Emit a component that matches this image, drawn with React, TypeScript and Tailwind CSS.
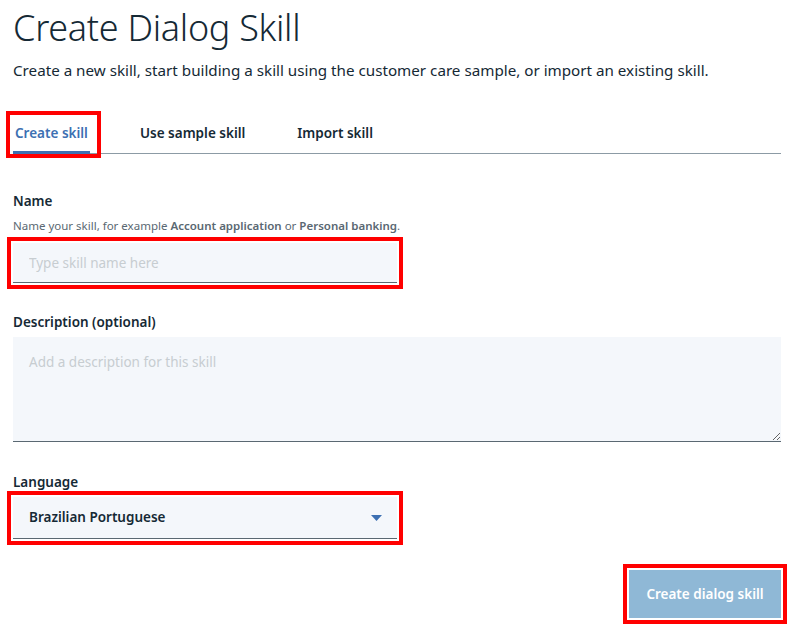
import React, { useState } from 'react';

const tabs = ['Create skill', 'Use sample skill', 'Import skill'];

const App: React.FC = () => {
  const [active, setActive] = useState(0);
  const [name, setName] = useState('');
  const [desc, setDesc] = useState('');

  return (
    <div className="min-h-screen bg-white text-[#152935] font-['Noto_Sans',sans-serif] px-[13px] pt-[4px]">
      <h1 className="text-[36px] font-light leading-[48px] tracking-[-0.3px]">Create Dialog Skill</h1>
      <p className="text-[15.2px] leading-[24px] mt-[6px]">
        Create a new skill, start building a skill using the customer care sample, or import an existing skill.
      </p>

      {/* Tabs */}
      <div className="mt-[31px] flex items-end border-b border-[#8c9ba5] w-[768px] h-[41px]">
        {tabs.map((t, i) => (
          <button
            key={t}
            onClick={() => setActive(i)}
            className={
              'relative h-[42px] -mb-px text-[13.5px] font-semibold px-[2px] pt-[9px] pb-[6px] border-b-[3px] ' +
              (i === 0 ? 'mr-[48px] ' : i === 1 ? 'mr-[48px] ' : '') +
              (i === active ? 'text-[#3d70b2] border-[#3d70b2]' : 'text-[#152935] border-transparent')
            }
          >
            {t}
            {i === 0 && (
              <span className="absolute -top-[1px] -bottom-[7px] -left-[7px] -right-[11px] border-[4px] border-[#f00] pointer-events-none" />
            )}
          </button>
        ))}
      </div>

      {/* Name */}
      <div className="mt-[38px]">
        <label className="block text-[13.5px] font-semibold leading-[18px]">Name</label>
        <p className="text-[11.5px] text-[#5a6872] mt-[8px] leading-[16px]">
          Name your skill, for example <span className="font-semibold">Account application</span> or{' '}
          <span className="font-semibold">Personal banking</span>.
        </p>
        <input
          value={name}
          onChange={(e) => setName(e.target.value)}
          placeholder="Type skill name here"
          className="mt-[9px] block w-[384px] h-[40px] bg-[#f4f7fb] border-b border-[#5a6872] px-[16px] text-[13.5px] placeholder:text-[#c7cdd1] outline-[4px] outline-[#f00] outline-offset-[2px]"
        />
      </div>

      {/* Description */}
      <div className="mt-[30px]">
        <label className="block text-[13.5px] font-semibold leading-[18px]">Description (optional)</label>
        <textarea
          value={desc}
          onChange={(e) => setDesc(e.target.value)}
          placeholder="Add a description for this skill"
          className="mt-[6px] block w-[768px] h-[105px] bg-[#f4f7fb] border-b border-[#5a6872] px-[16px] pt-[15px] text-[13.5px] placeholder:text-[#c7cdd1] outline-none"
        />
      </div>

      {/* Language */}
      <div className="mt-[31px]">
        <label className="block text-[13.5px] font-semibold leading-[18px]">Language</label>
        <div className="mt-[6px] w-[384px] h-[42px] bg-[#f4f7fb] border-b border-[#5a6872] flex items-center justify-between pl-[16px] pr-[15px] outline-[4px] outline-[#f00] outline-offset-[2px]">
          <span className="text-[13.5px] font-semibold">Brazilian Portuguese</span>
          <svg width="11" height="6" viewBox="0 0 11 6">
            <path d="M0 0h11L5.5 6z" fill="#3d70b2" />
          </svg>
        </div>
      </div>

      {/* Footer */}
      <div className="w-[768px] flex justify-end mt-[31px]">
        <button
          disabled
          className="w-[152px] h-[48px] bg-[#8fb8d6] text-white text-[13.5px] font-semibold outline-[4px] outline-[#f00] outline-offset-[2px]"
        >
          Create dialog skill
        </button>
      </div>
    </div>
  );
};

export default App;
